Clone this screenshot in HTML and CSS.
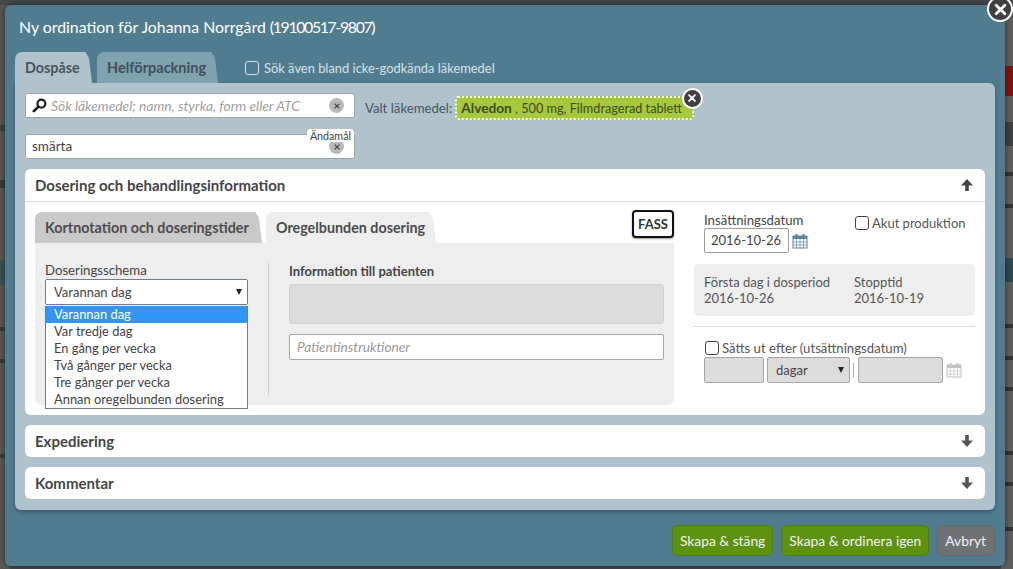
FILE: index.html
```html
<!DOCTYPE html>
<html lang="sv">
  <head>
    <meta charset="UTF-8" />
    <title>Ny ordination</title>
    <link rel="stylesheet" href="styles.css">
  </head>
  <body>
    <!-- Dimmed page behind the dialog -->
    <div class="backdrop">
      <div class="strip-left"></div>
      <div class="strip-right"></div>
      <div class="strip-red"></div>
    </div>

    <div class="modal">
      <button class="modal-close" aria-label="Stäng">
        <svg viewBox="0 0 12 12" width="13" height="13"><path d="M2 2l8 8M10 2l-8 8" stroke="#fff" stroke-width="2.6" stroke-linecap="round"/></svg>
      </button>
      <h1 class="modal-title">Ny ordination för Johanna Norrgård <span class="digits">(19100517-9807)</span></h1>

      <div class="top-tabs">
        <div class="top-tab active">Dospåse</div>
        <div class="top-tab second">Helförpackning</div>
        <label class="top-check"><span class="checkbox light"></span>Sök även bland icke-godkända läkemedel</label>
      </div>

      <div class="modal-body">
        <div class="search-area">
          <div class="search-fields">
            <div class="field search-field">
              <svg class="search-icon" viewBox="0 0 16 16" width="15" height="15"><circle cx="10" cy="6" r="4.2" fill="none" stroke="#222" stroke-width="2.4"/><path d="M6.800 9.200L2 14" stroke="#222" stroke-width="3" stroke-linecap="round"/></svg>
              <span class="placeholder">Sök läkemedel; namn, styrka, form eller ATC</span>
              <span class="clear-x"><svg viewBox="0 0 10 10" width="8" height="8"><path d="M2 2l6 6M8 2l-6 6" stroke="#444" stroke-width="1.500"/></svg></span>
            </div>
            <div class="field">
              <span class="field-value">smärta</span>
              <span class="clear-x"><svg viewBox="0 0 10 10" width="8" height="8"><path d="M2 2l6 6M8 2l-6 6" stroke="#444" stroke-width="1.500"/></svg></span>
              <span class="field-tag">Ändamål</span>
            </div>
          </div>
          <div class="selected-drug">
            <span class="selected-label">Valt läkemedel:</span>
            <span class="drug-chip"><b>Alvedon</b> , 500 mg, Filmdragerad tablett<span class="chip-close"><svg viewBox="0 0 12 12" width="10" height="10"><path d="M2.500 2.500l7 7M9.500 2.500l-7 7" stroke="#fff" stroke-width="2.200" stroke-linecap="round"/></svg></span></span>
          </div>
        </div>

        <section class="panel">
          <div class="panel-head open">
            <span>Dosering och behandlingsinformation</span>
            <svg viewBox="0 0 14 14" width="14" height="14"><path d="M7 1L1 7.500H5.200V13H8.800V7.500H13Z" fill="#444"/></svg>
          </div>
          <div class="panel-content">
            <div class="dose-col">
              <div class="dose-tabs">
                <div class="dose-tab first">Kortnotation och doseringstider</div>
                <div class="dose-tab active">Oregelbunden dosering</div>
                <div class="fass">FASS</div>
              </div>
              <div class="dose-box">
                <div class="schema">
                  <div class="label schema-label">Doseringsschema</div>
                  <div class="select open-select">Varannan dag<span class="caret"></span></div>
                  <ul class="select-list">
                    <li class="current">Varannan dag</li>
                    <li>Var tredje dag</li>
                    <li>En gång per vecka</li>
                    <li>Två gånger per vecka</li>
                    <li>Tre gånger per vecka</li>
                    <li>Annan oregelbunden dosering</li>
                  </ul>
                </div>
                <div class="patient-info">
                  <div class="label bold">Information till patienten</div>
                  <div class="info-area"></div>
                  <div class="info-input">Patientinstruktioner</div>
                </div>
              </div>
            </div>

            <div class="date-col">
              <div class="start-row">
                <div>
                  <div class="label start-label">Insättningsdatum</div>
                  <div class="date-line">
                    <div class="date-input">2016-10-26</div>
                    <svg class="cal" viewBox="0 0 16 16" width="16" height="16"><use href="#cal-icon"/></svg>
                  </div>
                </div>
                <label class="acute"><span class="checkbox"></span>Akut produktion</label>
              </div>
              <div class="period-box">
                <div class="period-first">Första dag i dosperiod<br>2016-10-26</div>
                <div>Stopptid<br>2016-10-19</div>
              </div>
              <div class="stop-block">
                <label class="stop-check"><span class="checkbox"></span>Sätts ut efter (utsättningsdatum)</label>
                <div class="stop-row">
                  <div class="off-input num"></div>
                  <div class="off-input unit">dagar<span class="caret"></span></div>
                  <span class="pipe"></span>
                  <div class="off-input stop-date"></div>
                  <svg class="cal off" viewBox="0 0 16 16" width="16" height="16"><use href="#cal-icon"/></svg>
                </div>
              </div>
            </div>
          </div>
        </section>

        <section class="panel closed">
          <div class="panel-head">
            <span>Expediering</span>
            <svg viewBox="0 0 14 14" width="14" height="14"><path d="M7 13L1 6.500H5.200V1H8.800V6.500H13Z" fill="#555"/></svg>
          </div>
        </section>
        <section class="panel closed">
          <div class="panel-head">
            <span>Kommentar</span>
            <svg viewBox="0 0 14 14" width="14" height="14"><path d="M7 13L1 6.500H5.200V1H8.800V6.500H13Z" fill="#555"/></svg>
          </div>
        </section>
      </div>

      <div class="modal-foot">
        <button class="btn green">Skapa &amp; stäng</button>
        <button class="btn green">Skapa &amp; ordinera igen</button>
        <button class="btn gray">Avbryt</button>
      </div>
    </div>

    <svg class="defs" width="0" height="0">
      <symbol id="cal-icon" viewBox="0 0 16 16">
        <rect x="1" y="3" width="14" height="12" fill="none" stroke="currentColor"/>
        <rect x="1" y="3" width="14" height="3" fill="currentColor"/>
        <rect x="3.500" y="1" width="2" height="3" fill="currentColor"/>
        <rect x="10.500" y="1" width="2" height="3" fill="currentColor"/>
        <path d="M1 9h14M1 12h14M4.500 6v9M8 6v9M11.500 6v9" stroke="currentColor" stroke-width="0.700"/>
      </symbol>
    </svg>
  </body>
</html>
```

FILE: styles.css
```css
* {
  margin: 0;
  padding: 0;
  box-sizing: border-box;
  font-family: Lato, "Open Sans", sans-serif;
}

body {
  width: 1013px;
  height: 569px;
  background-color: #47484a;
  color: #444;
  font-size: 14px;
  position: relative;
  overflow: hidden;
}

/* Backdrop */
.backdrop {
  position: absolute;
  top: 0;
  left: 0;
  right: 0;
  bottom: 0;
}

.strip-left,
.strip-right {
  position: absolute;
  top: 5px;
  bottom: 0;
  width: 10px;
}

.strip-left {
  left: 0;
  background: linear-gradient(to bottom,
    #5b5852 0, #5b5852 120px, #3f3f3d 120px, #3f3f3d 126px,
    #5b5852 126px, #5b5852 175px, #3c3c3a 175px, #3c3c3a 183px,
    #5b5852 183px, #5b5852 255px, #3d5158 255px, #3d5158 280px,
    #5b5852 280px, #5b5852 322px, #3a3a38 322px, #3a3a38 326px,
    #5b5852 326px, #5b5852 354px, #3a3a38 354px, #3a3a38 358px,
    #5b5852 358px, #5b5852 449px, #3a3a38 449px, #3a3a38 453px,
    #5b5852 453px);
}

.strip-right {
  right: 0;
  width: 12px;
  background: linear-gradient(to bottom,
    #5f5f5f 0, #5f5f5f 117px, #3d3f40 117px, #3d3f40 141px,
    #5f5f5f 141px, #5f5f5f 167px, #333 167px, #333 171px,
    #5f5f5f 171px, #5f5f5f 199px, #333 199px, #333 203px,
    #5f5f5f 203px, #5f5f5f 253px, #2f4a52 253px, #2f4a52 277px,
    #5f5f5f 277px, #5f5f5f 319px, #333 319px, #333 323px,
    #5f5f5f 323px, #5f5f5f 351px, #333 351px, #333 355px,
    #5f5f5f 355px, #5f5f5f 382px, #333 382px, #333 386px,
    #5f5f5f 386px, #5f5f5f 446px, #333 446px, #333 450px,
    #5f5f5f 450px, #5f5f5f 477px, #333 477px, #333 481px,
    #5f5f5f 481px, #5f5f5f 522px, #333 522px, #333 526px,
    #5f5f5f 526px);
}

.strip-red {
  position: absolute;
  top: 66px;
  right: 0;
  width: 12px;
  height: 30px;
  background: #7c1414;
}

/* Modal */
.modal {
  position: absolute;
  top: 5px;
  left: 5px;
  width: 1000px;
  height: 561px;
  background-color: #517c8f;
  border-radius: 6px;
  padding: 0 10px;
  box-shadow: 0 0 6px rgba(0, 0, 0, 0.5);
}

.modal-close {
  position: absolute;
  top: -9px;
  right: -8px;
  width: 26px;
  height: 26px;
  border-radius: 50%;
  border: 2px solid #fff;
  background: #3f3f42;
  display: flex;
  align-items: center;
  justify-content: center;
}

.modal-title {
  font-size: 15.85px;
  font-weight: 400;
  color: #fff;
  padding: 12px 4px 0;
  height: 47px;
  line-height: 20px;
}

.digits {
  letter-spacing: -1.35px;
}

/* Top tabs */
.top-tabs {
  display: flex;
  align-items: center;
  height: 31px;
}

.top-tab {
  position: relative;
  z-index: 0;
  width: 71px;
  height: 31px;
  padding: 7px 0 0 10px;
  margin-right: 11px;
  background: #b0c3cc;
  border-radius: 7px 0 0 0;
  font-weight: 700;
  font-size: 14.3px;
  white-space: nowrap;
  color: #46555e;
}

.top-tab.second {
  width: 115px;
  margin-right: 6px;
  background: #7fa1b0;
  font-size: 14.5px;
  color: #3e4f58;
}

/* the slanted right edge of a tab */
.top-tab::after,
.dose-tab::after {
  content: "";
  position: absolute;
  z-index: -1;
  top: 0;
  bottom: 0;
  right: -6px;
  width: 12px;
  background: inherit;
  border-radius: 0 7px 0 0;
  transform: skewX(7deg);
  transform-origin: bottom right;
}

.top-check {
  display: flex;
  align-items: center;
  gap: 5px;
  margin-left: 27px;
  color: #d6e2e7;
  font-size: 12.9px;
}

.checkbox {
  display: inline-block;
  width: 14px;
  height: 14px;
  border: 1px solid #444;
  border-radius: 3px;
  background: #fff;
  flex-shrink: 0;
}

.checkbox.light {
  background: transparent;
  border-color: #d6e2e7;
}

/* Body of the modal */
.modal-body {
  height: 427px;
  background: #b0c3cc;
  border-radius: 0 6px 6px 6px;
  padding: 10px;
  box-shadow: 0 2px 4px rgba(0, 0, 0, 0.3);
}

.search-area {
  display: flex;
  gap: 10px;
  height: 76px;
}

.search-fields {
  width: 330px;
  display: flex;
  flex-direction: column;
  gap: 16px;
}

.field {
  position: relative;
  height: 25px;
  background: #fff;
  border: 1px solid #9aa4aa;
  border-radius: 2px;
  display: flex;
  align-items: center;
  padding: 0 6px;
  font-size: 13.5px;
  color: #444;
}

.field-value {
  margin-bottom: 2px;
}

.search-icon {
  margin-right: 4px;
}

.placeholder {
  font-style: italic;
  font-size: 13.8px;
  color: #a0a0a0;
}

.clear-x {
  position: absolute;
  right: 10px;
  top: 4px;
  width: 15px;
  height: 15px;
  border-radius: 50%;
  background: #b9b9b9;
  display: flex;
  align-items: center;
  justify-content: center;
}

.field-tag {
  position: absolute;
  top: -6px;
  right: 0;
  background: #fff;
  border-radius: 4px;
  padding: 0 3px;
  font-size: 10.7px;
  line-height: 13px;
  color: #444;
}

.selected-drug {
  display: flex;
  align-items: center;
  gap: 3px;
  height: 25px;
  margin-top: 2px;
}

.selected-label {
  font-size: 13.2px;
  color: #46555e;
}

.drug-chip {
  position: relative;
  background: #a6c83c;
  border: 2px dotted #fff;
  border-radius: 3px;
  height: 24px;
  line-height: 20px;
  padding: 0 10px 0 4px;
  font-size: 12.7px;
  color: #3f4a22;
}

.drug-chip b {
  font-size: 13.7px;
}

.chip-close {
  position: absolute;
  top: -10px;
  right: -11px;
  width: 21px;
  height: 21px;
  border-radius: 50%;
  border: 2px solid #fff;
  background: #404045;
  display: flex;
  align-items: center;
  justify-content: center;
}

/* Panels */
.panel {
  background: #fff;
  border-radius: 6px;
  margin-bottom: 10px;
}

.panel-head {
  height: 32px;
  display: flex;
  align-items: center;
  justify-content: space-between;
  padding: 0 11px 0 10px;
  font-size: 15px;
  font-weight: 700;
  color: #454545;
}

.panel-head.open {
  height: 33px;
  border-bottom: 1px solid #dcdcdc;
}

.panel-content {
  display: flex;
  height: 213px;
  padding: 9px 10px 0;
}

.dose-col {
  width: 639px;
  margin-right: 20px;
}

.dose-tabs {
  display: flex;
  align-items: flex-end;
  height: 32px;
  position: relative;
}

.dose-tab {
  position: relative;
  z-index: 0;
  width: 164px;
  height: 31px;
  padding: 7px 0 0 10px;
  border-radius: 7px 0 0 0;
  background: #eee;
  font-weight: 700;
  font-size: 14.3px;
  white-space: nowrap;
  color: #4c4c4c;
}

.dose-tab.first {
  width: 221px;
  margin-right: 10px;
  background: #c9c9c9;
}

.fass {
  position: absolute;
  right: 0;
  top: -1px;
  width: 42px;
  height: 28px;
  border: 2px solid #111;
  border-radius: 4px;
  background: #fff;
  text-align: center;
  line-height: 24px;
  font-size: 13px;
  font-weight: 700;
  color: #333;
  box-shadow: 0 1px 2px rgba(0, 0, 0, 0.4);
}

.dose-box {
  display: flex;
  height: 162px;
  background: #eee;
  border-radius: 0 0 6px 6px;
  padding: 20px 10px 0;
}

.schema {
  position: relative;
  width: 203px;
  margin-right: 20px;
}

.label {
  font-size: 13.2px;
  line-height: 16px;
  color: #454545;
}

.schema-label {
  margin-top: -1px;
  margin-bottom: 1px;
}

.label.bold {
  font-weight: 700;
  font-size: 13px;
  line-height: 17px;
}

.select {
  position: relative;
  height: 26px;
  padding: 0 8px;
  line-height: 24px;
  font-size: 13px;
  color: #444;
  background: #fff;
  border: 1px solid #6d7c8e;
  border-radius: 2px;
}

.caret {
  position: absolute;
  right: 5px;
  top: 9px;
  border-left: 3px solid transparent;
  border-right: 3px solid transparent;
  border-top: 6px solid #222;
}

.select-list {
  position: absolute;
  top: 43px;
  left: 0;
  width: 203px;
  list-style: none;
  background: #fff;
  border: 1px solid #6d7c8e;
  border-top: none;
  z-index: 5;
}

.select-list li {
  height: 17px;
  line-height: 17px;
  padding-left: 8px;
  font-size: 12.9px;
  color: #444;
}

.select-list li.current {
  background: #3295f5;
  color: #fff;
}

.patient-info {
  width: 396px;
  height: 132px;
  padding-left: 20px;
  border-left: 1px solid #ccc;
}

.info-area {
  height: 40px;
  margin-top: 4px;
  background: #dcdcdc;
  border: 1px solid #cfcfcf;
  border-radius: 4px;
}

.info-input {
  height: 26px;
  margin-top: 10px;
  padding: 0 7px;
  line-height: 24px;
  background: #fff;
  border: 1px solid #a5a5a5;
  border-radius: 2px;
  font-style: italic;
  font-size: 13.7px;
  color: #9a9a9a;
}

/* Dates */
.date-col {
  width: 281px;
  font-size: 13px;
  color: #555;
}

.start-row {
  display: flex;
  padding-left: 10px;
  height: 53px;
}

.start-label {
  padding-top: 1px;
}

.date-line {
  display: flex;
  align-items: center;
  gap: 3px;
}

.date-input {
  width: 85px;
  height: 25px;
  line-height: 23px;
  padding-left: 6px;
  background: #fff;
  border: 1px solid #9a9a9a;
  border-radius: 2px;
  font-size: 13px;
  color: #444;
}

.cal {
  color: #5d8598;
}

.cal.off {
  color: #c4c4c4;
}

.acute {
  display: flex;
  align-items: center;
  gap: 3px;
  height: 15px;
  margin-left: 47px;
  margin-top: 4px;
  white-space: nowrap;
}

.period-box {
  display: flex;
  height: 52px;
  padding: 10px;
  background: #eee;
  border-radius: 5px;
  line-height: 16px;
}

.period-first {
  width: 150px;
}

.stop-block {
  margin-top: 10px;
  padding: 13px 0 0 10px;
  border-top: 1px solid #d8d8d8;
}

.stop-check {
  display: flex;
  align-items: center;
  gap: 3px;
  height: 15px;
  padding-left: 1px;
  font-size: 13.2px;
}

.stop-row {
  display: flex;
  align-items: center;
  margin-top: 2px;
}

.off-input {
  position: relative;
  height: 26px;
  line-height: 24px;
  background: #dcdcdc;
  border: 1px solid #a5a5a5;
  border-radius: 2px;
  font-size: 13px;
  color: #444;
}

.off-input.num {
  width: 60px;
  margin-right: 3px;
}

.off-input.unit {
  width: 83px;
  padding-left: 8px;
}

.pipe {
  width: 1px;
  height: 14px;
  margin: 0 4px 0 3px;
  background: #aaa;
}

.off-input.stop-date {
  width: 85px;
  margin-right: 3px;
}

/* Footer */
.modal-foot {
  display: flex;
  justify-content: flex-end;
  gap: 8px;
  margin-top: 15px;
}

.btn {
  height: 31px;
  padding: 0 7px;
  border-radius: 5px;
  font-size: 13.8px;
  color: #f2f2f2;
  border: 1px solid transparent;
}

.btn.green {
  background: #5c9210;
  border-color: #4f7f14;
}

.btn.gray {
  padding: 0 8px 0 7px;
  background: #6e7275;
  border-color: #65696c;
}

.defs {
  position: absolute;
}
```
